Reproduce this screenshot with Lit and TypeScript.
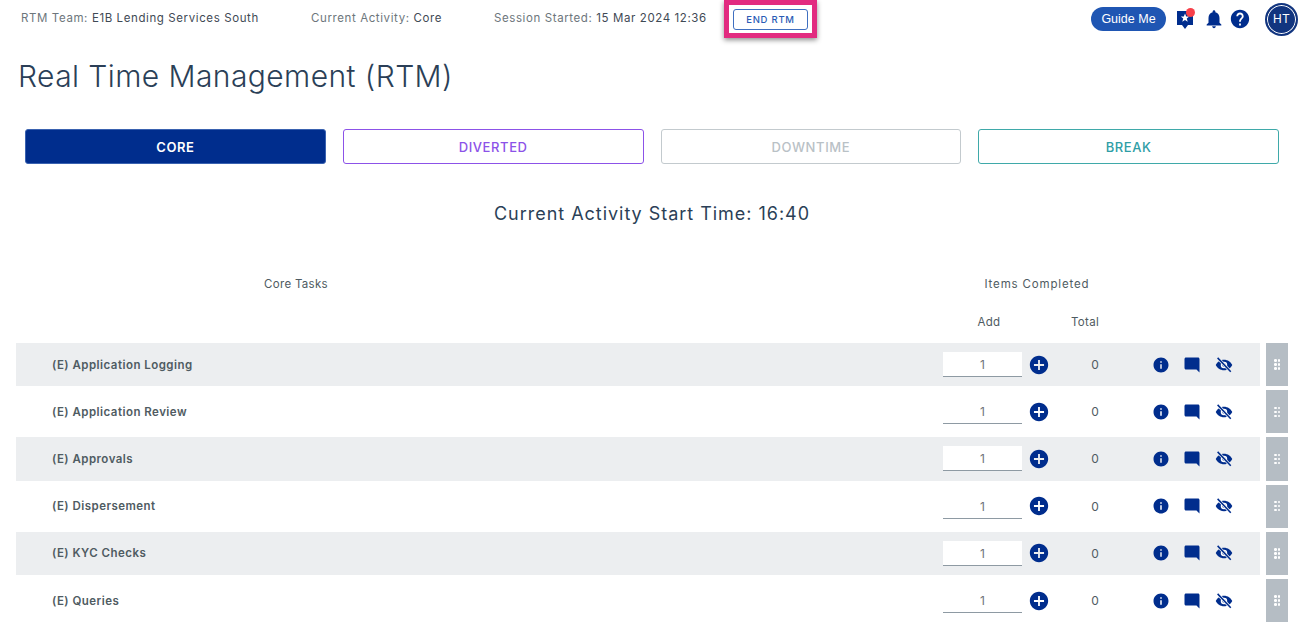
import { LitElement, html, css, svg } from "lit";
import { customElement } from "lit/decorators.js";

const P = {
  info: "M12 2C6.48 2 2 6.48 2 12s4.48 10 10 10 10-4.48 10-10S17.52 2 12 2zm1 15h-2v-6h2v6zm0-8h-2V7h2v2z",
  comment: "M21.99 4c0-1.1-.89-2-1.99-2H4c-1.1 0-2 .9-2 2v12c0 1.1.9 2 2 2h14l4 4-.01-18z",
  plus: "M12 2C6.48 2 2 6.48 2 12s4.48 10 10 10 10-4.48 10-10S17.52 2 12 2zm5.5 11H13v4.5h-2V13H6.5v-2H11V6.5h2V11h4.5v2z",
  bell: "M12 22c1.1 0 2-.9 2-2h-4c0 1.1.89 2 2 2zm6-6v-5c0-3.07-1.64-5.64-4.5-6.32V4c0-.83-.67-1.5-1.5-1.5s-1.5.67-1.5 1.5v.68C7.63 5.36 6 7.92 6 11v5l-2 2v1h16v-1l-2-2z",
  help: "M12 2C6.48 2 2 6.48 2 12s4.48 10 10 10 10-4.48 10-10S17.52 2 12 2zm1 17h-2v-2h2v2zm2.07-7.75l-.9.92C13.45 12.9 13 13.5 13 15h-2v-.5c0-1.1.45-2.1 1.17-2.83l1.24-1.26c.37-.36.59-.86.59-1.41 0-1.1-.9-2-2-2s-2 .9-2 2H8c0-2.21 1.79-4 4-4s4 1.79 4 4c0 .88-.36 1.68-.93 2.25z",
};
const icon = (d: string, cls: string) =>
  html`<svg class=${cls} viewBox="0 0 24 24">${svg`<path d=${d}></path>`}</svg>`;

const eye = html`<svg class="a3" viewBox="0 0 24 24">${svg`
  <path d="M12 5C7 5 2.800 8 1 12c1.800 4 6 7 11 7s9.200-3 11-7c-1.800-4-6-7-11-7z"></path>
  <circle cx="12" cy="12" r="4.300" fill="#fff"></circle>
  <circle cx="12" cy="12" r="2.300"></circle>
  <path d="M3.500 2.500L21 21" stroke="#eceef0" stroke-width="4" fill="none"></path>
  <path d="M3.500 2.500L21 21" stroke="#002d8d" stroke-width="2" fill="none"></path>
`}</svg>`;

const TASKS = [
  "(E) Application Logging",
  "(E) Application Review",
  "(E) Approvals",
  "(E) Dispersement",
  "(E) KYC Checks",
  "(E) Queries",
];

@customElement("app-root")
export class AppRoot extends LitElement {
  static styles = css`
    :host {
      display: block;
      width: 1304px;
      height: 642px;
      overflow: hidden;
      background: #fff;
      font-family: "Inter", "Open Sans", sans-serif;
      color: #4f5b62;
    }
    .top {
      display: flex;
      align-items: flex-start;
      height: 39px;
      padding: 0 6px 0 21px;
    }
    .info {
      font-size: 11.5px;
      line-height: 36px;
      letter-spacing: 0.6px;
      white-space: nowrap;
      color: #6d767c;
    }
    .info b { font-weight: 400; color: #3f4a55; }
    .i1 { width: 290px; }
    .i2 { width: 183px; }
    .i3 { width: 230px; }
    .mark {
      box-sizing: border-box;
      width: 93px;
      height: 38px;
      border: 5px solid #e22b80;
      padding: 4px 4px 3px;
      box-shadow: 0 2px 5px rgba(0, 0, 0, 0.45);
      display: flex;
      background: #fff;
    }
    .end {
      flex: 1;
      border: 1px solid #3f6fc0;
      border-radius: 3px;
      color: #2a5bb5;
      font-size: 9.5px;
      font-weight: 500;
      letter-spacing: 0.75px;
      display: flex;
      align-items: center;
      justify-content: center;
    }
    .tools { margin-left: auto; display: flex; align-items: center; height: 38px; }
    .guide {
      width: 75px;
      height: 24px;
      border-radius: 12px;
      background: #1f56b3;
      color: #fff;
      font: 12.500px/24px "Liberation Sans", sans-serif;
      text-align: center;
      margin-right: 11px;
    }
    .star { position: relative; width: 16px; height: 22px; margin-right: 10px; }
    .star svg { display: block; width: 16px; height: 22px; fill: #002d8d; }
    .dot {
      position: absolute;
      top: 0;
      right: -2px;
      width: 9px;
      height: 9px;
      border-radius: 50%;
      background: #f7404a;
    }
    .ic22 { width: 22px; height: 22px; fill: #002d8d; display: block; }
    .bell { margin-right: 4px; }
    .ava {
      margin-left: 14px;
      box-sizing: border-box;
      width: 33px;
      height: 33px;
      border-radius: 50%;
      background: #12357f;
      border: 2px solid #12357f;
      box-shadow: inset 0 0 0 1px #fff;
      color: #fff;
      font: 12px/29px "Liberation Sans", sans-serif;
      letter-spacing: 0.5px;
      text-align: center;
    }
    h1 {
      margin: 17px 0 0 18px;
      font-size: 30px;
      line-height: 40px;
      font-weight: 300;
      color: #2b3f57;
      letter-spacing: 0.42px;
    }
    .tabs {
      display: grid;
      grid-template-columns: repeat(4, 1fr);
      gap: 17px;
      margin: 33px 25px 0;
    }
    .tab {
      height: 35px;
      box-sizing: border-box;
      border: 1px solid;
      border-radius: 3px;
      font-size: 13px;
      font-weight: 500;
      letter-spacing: 0.6px;
      display: flex;
      align-items: center;
      justify-content: center;
    }
    .core { background: #002d8d; border-color: #3a62b0; color: #fff; font-weight: 600; }
    .div { border-color: #8c52e8; color: #8c52e8; }
    .down { border-color: #c3cace; color: #b9c1c6; }
    .brk { border-color: #3fa9a9; color: #2f9ea6; }
    .start {
      margin-top: 38px;
      text-align: center;
      font-size: 18px;
      line-height: 24px;
      color: #2b3f57;
      letter-spacing: 0.97px;
    }
    .heads, .subs { font-size: 11.5px; line-height: 16px; letter-spacing: 0.3px; color: #4f5b62; display: flex; }
    .heads { margin-top: 50px; padding-left: 16px; }
    .heads span { width: 560px; text-align: center; }
    .heads .items { width: 160px; margin-left: 381px; letter-spacing: 0.85px; white-space: nowrap; }
    .subs { margin-top: 22px; padding-left: 959px; }
    .subs span { width: 60px; text-align: center; }
    .subs span + span { margin-left: 36px; }
    .rows { margin: 13px 16px 0; display: grid; gap: 4px; }
    .row { display: flex; gap: 6px; height: 43.2px; }
    .body { flex: 1; display: flex; align-items: center; padding-left: 36px; }
    .row:nth-child(odd) .body { background: #eceef0; }
    .row:nth-child(even) .a3 path:nth-of-type(2) { stroke: #fff; }
    .name { flex: 1; font-size: 11.5px; font-weight: 600; color: #4f5b62; letter-spacing: 0.47px; padding-right: 1px; }
    .num {
      box-sizing: border-box;
      width: 79px;
      height: 25px;
      background: #fff;
      border-bottom: 1px solid #8e9aa3;
      font-size: 12px;
      line-height: 25px;
      text-align: center;
      color: #6f7478;
    }
    .plus { width: 22px; height: 22px; fill: #002d8d; margin: 0 0 0 6px; display: block; }
    .tot { width: 60px; margin-left: 15px; margin-right: 27px; text-align: center; font-size: 12px; color: #4f5b62; }
    .acts { display: flex; width: 108px; align-items: center; }
    .acts svg { width: 18px; height: 18px; fill: #002d8d; display: block; }
    .acts .a2 { margin-left: 13px; }
    .acts .a3 { margin-left: 14px; }
    .grip {
      width: 22px;
      background: #b5bdc4;
      display: grid;
      grid-template-columns: 2px 2px;
      gap: 1.500px;
      align-content: center;
      justify-content: center;
    }
    .grip i { width: 2.500px; height: 2.500px; background: #fff; border-radius: 50%; }
  `;

  render() {
    return html`
      <div class="top">
        <div class="info i1">RTM Team: <b>E1B Lending Services South</b></div>
        <div class="info i2">Current Activity: <b>Core</b></div>
        <div class="info i3">Session Started: <b>15 Mar 2024 12:36</b></div>
        <div class="mark"><div class="end">END RTM</div></div>
        <div class="tools">
          <div class="guide">Guide Me</div>
          <div class="star">
            <svg viewBox="0 0 16 22"><path fill-rule="evenodd" d="M0 3h16v14h-5l-3 4-3-4H0zM8 5.500l-1.200 3H3.800l2.400 2-.9 3.200L8 11.900l2.700 1.800-.9-3.200 2.400-2h-3z"></path></svg>
            <span class="dot"></span>
          </div>
          ${icon(P.bell, "ic22 bell")}${icon(P.help, "ic22")}
          <div class="ava">HT</div>
        </div>
      </div>
      <h1>Real Time Management (RTM)</h1>
      <div class="tabs">
        <div class="tab core">CORE</div>
        <div class="tab div">DIVERTED</div>
        <div class="tab down">DOWNTIME</div>
        <div class="tab brk">BREAK</div>
      </div>
      <div class="start">Current Activity Start Time: 16:40</div>
      <div class="heads"><span>Core Tasks</span><span class="items">Items Completed</span></div>
      <div class="subs"><span>Add</span><span>Total</span></div>
      <div class="rows">
        ${TASKS.map(
          (t) => html`<div class="row">
            <div class="body">
              <div class="name">${t}</div>
              <div class="num">1</div>
              ${icon(P.plus, "plus")}
              <div class="tot">0</div>
              <div class="acts">
                ${icon(P.info, "a1")}${icon(P.comment, "a2")}${eye}
              </div>
            </div>
            <div class="grip">${[0, 1, 2, 3, 4, 5].map(() => html`<i></i>`)}</div>
          </div>`
        )}
      </div>
    `;
  }
}
